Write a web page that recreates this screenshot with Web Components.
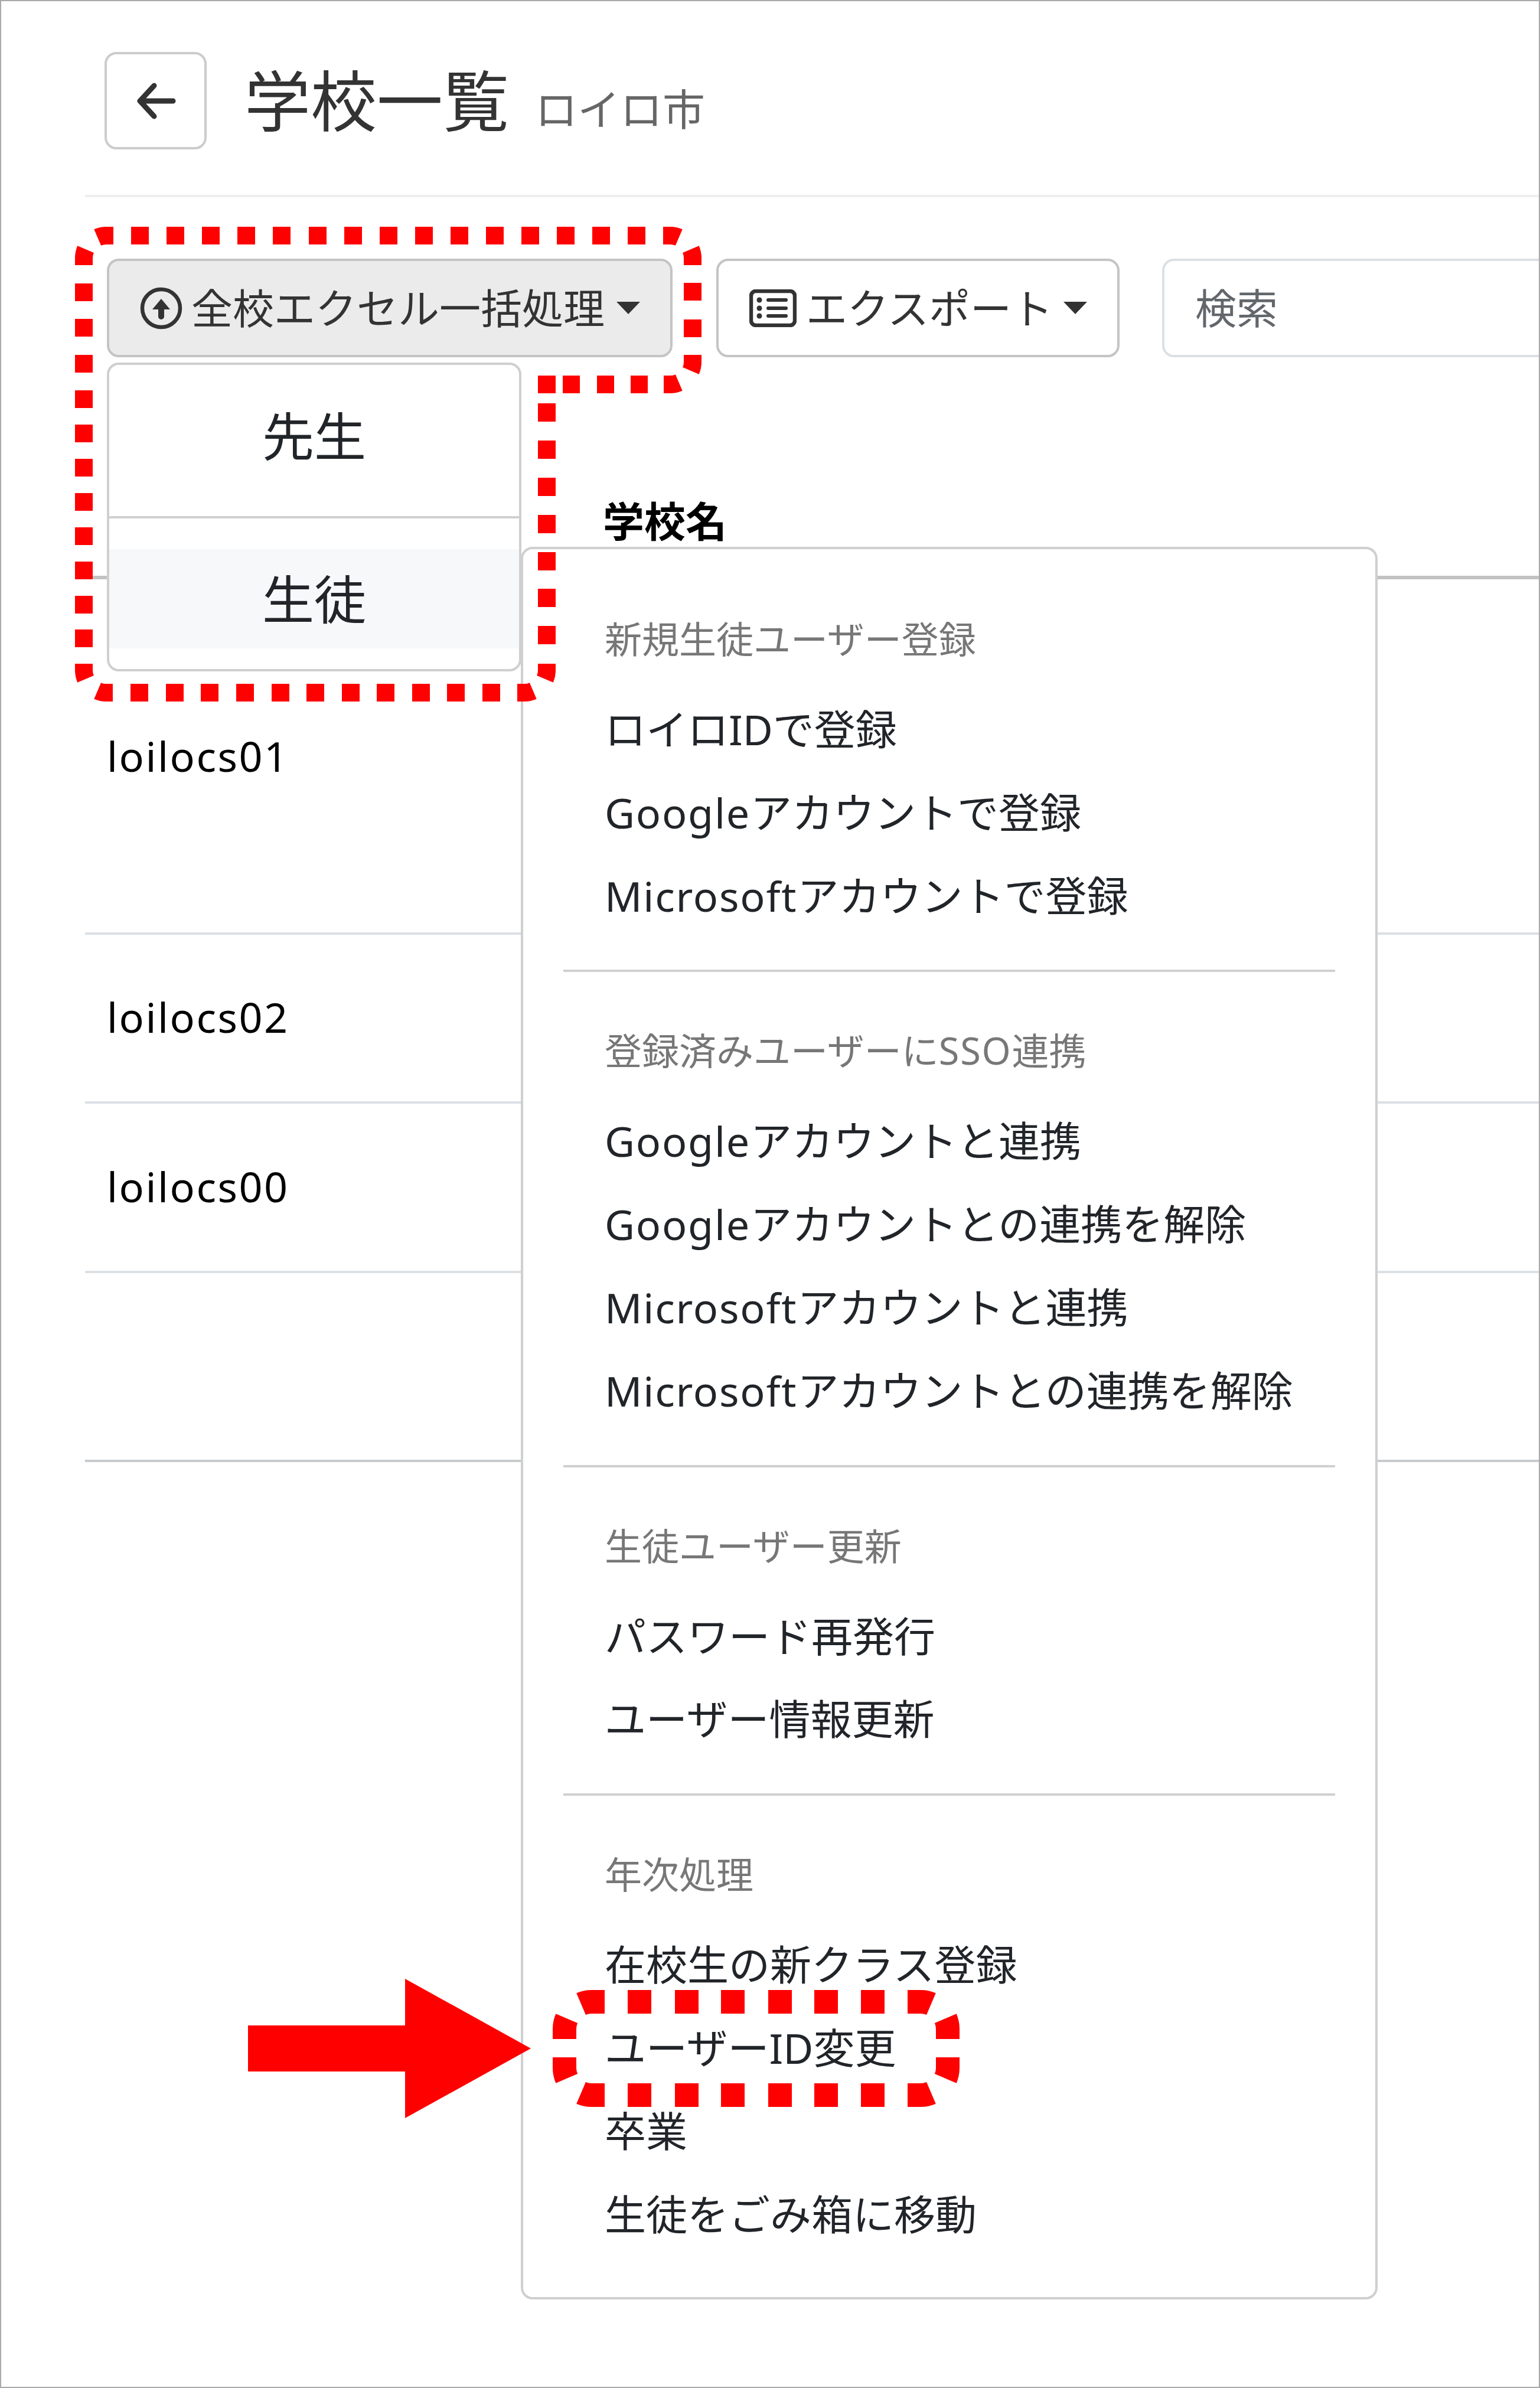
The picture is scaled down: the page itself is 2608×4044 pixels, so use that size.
<!DOCTYPE html>
<html lang="ja">
<head>
<meta charset="utf-8">
<title>学校一覧</title>
<style>
	html, body {
		margin: 0;
		background: #fff;
		font-family: "Noto Sans", "Noto Sans CJK JP", sans-serif;
		color: #212529;
	}
	/* latin words run a little wider in the reference */
	.en {
		letter-spacing: 1.8px;
	}
</style>
</head>
<body>
<app-page>
	<back-header>
		<span slot="title">学校一覧</span>
		<span slot="sub">ロイロ市</span>
	</back-header>
	<tool-bar>
		<tool-button active style="--text-gap: 15px; --caret-gap: 20px">
			<svg slot="icon" width="72" height="72" viewBox="0 0 72 72">
				<circle cx="36" cy="36" r="32" fill="none" stroke="#333" stroke-width="6.5"/>
				<path d="M36 20L51 38H41V50a5 5 0 0 1-10 0V38H21Z" fill="#333"/>
			</svg>
			全校エクセル一括処理
		</tool-button>
		<tool-button style="--text-gap: 16px; --caret-gap: 18px">
			<svg slot="icon" width="80" height="64" viewBox="0 0 80 64">
				<rect x="3" y="3" width="74" height="58" rx="8" fill="none" stroke="#333" stroke-width="6.5"/>
				<g fill="#333">
					<circle cx="17" cy="18" r="4.5"/>
					<circle cx="17" cy="32" r="4.5"/>
					<circle cx="17" cy="45" r="4.5"/>
					<rect x="29" y="15" width="36" height="6" rx="3"/>
					<rect x="29" y="29" width="36" height="6" rx="3"/>
					<rect x="29" y="42" width="36" height="6" rx="3"/>
				</g>
			</svg>
			エクスポート
		</tool-button>
		<search-box>検索</search-box>
	</tool-bar>
	<school-table>
		<span slot="head">学校名</span>
		<school-row style="--row-height: 598px">loilocs01</school-row>
		<school-row style="--row-height: 278px; --nudge: 4px">loilocs02</school-row>
		<school-row style="--row-height: 279px; --nudge: 4px">loilocs00</school-row>
		<school-row style="--row-height: 316px; --line: #c6cacd"></school-row>
	</school-table>

	<drop-menu style="left: 179px; top: 612px; width: 694px; padding: 36px 0 35px">
		<big-item>先生</big-item>
		<menu-divider style="--m-top: 52px; --m-bottom: 52px; --m-side: 0px"></menu-divider>
		<big-item hover>生徒</big-item>
	</drop-menu>

	<drop-menu style="left: 880px; top: 924px; width: 1443px; padding: 69px 0 70px">
		<menu-section>
			<span slot="heading">新規生徒ユーザー登録</span>
			<menu-item>ロイロIDで登録</menu-item>
			<menu-item><span class="en">Google</span>アカウントで登録</menu-item>
			<menu-item><span class="en">Microsoft</span>アカウントで登録</menu-item>
		</menu-section>
		<menu-divider></menu-divider>
		<menu-section>
			<span slot="heading">登録済みユーザーに<span class="en">SSO</span>連携</span>
			<menu-item><span class="en">Google</span>アカウントと連携</menu-item>
			<menu-item><span class="en">Google</span>アカウントとの連携を解除</menu-item>
			<menu-item><span class="en">Microsoft</span>アカウントと連携</menu-item>
			<menu-item><span class="en">Microsoft</span>アカウントとの連携を解除</menu-item>
		</menu-section>
		<menu-divider></menu-divider>
		<menu-section>
			<span slot="heading">生徒ユーザー更新</span>
			<menu-item>パスワード再発行</menu-item>
			<menu-item>ユーザー情報更新</menu-item>
		</menu-section>
		<menu-divider></menu-divider>
		<menu-section>
			<span slot="heading">年次処理</span>
			<menu-item>在校生の新クラス登録</menu-item>
			<menu-item>ユーザーID変更</menu-item>
			<menu-item>卒業</menu-item>
			<menu-item>生徒をごみ箱に移動</menu-item>
		</menu-section>
	</drop-menu>

	<mark-layer></mark-layer>
</app-page>

<script>
class AppPage extends HTMLElement {
	constructor() {
		super();
		this.attachShadow({ mode: 'open' }).innerHTML = `
			<style>
			:host {
				display: block;
				position: relative;
				box-sizing: border-box;
				width: 2608px;
				height: 4044px;
				border: 2px solid #aaa;
				overflow: hidden;
				background: #fff;
			}
			</style>
			<slot></slot>
		`;
	}
}

class BackHeader extends HTMLElement {
	constructor() {
		super();
		this.attachShadow({ mode: 'open' }).innerHTML = `
			<style>
			:host {
				display: block;
				margin-left: 142px;
				padding: 86px 0 77px 33px;
				border-bottom: 4px solid #eee;
			}
			.row {
				display: flex;
				align-items: center;
				height: 165px;
			}
			.back {
				display: flex;
				align-items: center;
				justify-content: center;
				box-sizing: border-box;
				width: 173px;
				height: 165px;
				border: 4px solid #ccc;
				border-radius: 20px;
			}
			.title {
				margin-left: 64px;
				font-size: 112px;
				line-height: 165px;
				color: #333;
			}
			.sub {
				margin: 28px 0 0 44px;
				font-size: 72px;
				line-height: 165px;
				color: #666;
			}
			</style>
			<div class="row">
				<div class="back">
					<svg width="72" height="62" viewBox="0 0 72 62">
						<path d="M33 5L9 31L33 57M9 31H65" fill="none" stroke="#333" stroke-width="9" stroke-linecap="round" stroke-linejoin="round"/>
					</svg>
				</div>
				<div class="title"><slot name="title"></slot></div>
				<div class="sub"><slot name="sub"></slot></div>
			</div>
		`;
	}
}

class ToolBar extends HTMLElement {
	constructor() {
		super();
		this.attachShadow({ mode: 'open' }).innerHTML = `
			<style>
			:host {
				display: flex;
				gap: 74px;
				margin: 104px 0 0 179px;
				width: 3000px;
			}
			</style>
			<slot></slot>
		`;
	}
}

class ToolButton extends HTMLElement {
	constructor() {
		super();
		this.attachShadow({ mode: 'open' }).innerHTML = `
			<style>
			:host {
				display: flex;
				align-items: center;
				box-sizing: border-box;
				height: 167px;
				padding: 0 51px 0 52px;
				border: 4px solid #c4c4c4;
				border-radius: 20px;
				font-size: 70px;
				color: #333;
				white-space: nowrap;
			}
			:host([active]) {
				background: #ebebeb;
			}
			.icon {
				display: flex;
				margin-right: var(--text-gap, 18px);
			}
			.label {
				margin-bottom: 6px;
			}
			.caret {
				margin-left: var(--caret-gap, 20px);
			}
			</style>
			<span class="icon"><slot name="icon"></slot></span>
			<span class="label"><slot></slot></span>
			<svg class="caret" width="40" height="21" viewBox="0 0 40 21"><path d="M0 0H40L20 21Z" fill="#333"/></svg>
		`;
	}
}

class SearchBox extends HTMLElement {
	constructor() {
		super();
		this.attachShadow({ mode: 'open' }).innerHTML = `
			<style>
			:host {
				display: flex;
				align-items: center;
				box-sizing: border-box;
				width: 800px;
				height: 167px;
				margin-left: -2px;
				padding: 0 0 6px 52px;
				border: 4px solid #dbe0e5;
				border-radius: 20px;
				font-size: 70px;
				color: #62676c;
			}
			</style>
			<slot></slot>
		`;
	}
}

class SchoolTable extends HTMLElement {
	constructor() {
		super();
		this.attachShadow({ mode: 'open' }).innerHTML = `
			<style>
			:host {
				display: block;
				margin-left: 142px;
			}
			.head {
				box-sizing: border-box;
				height: 376px;
				padding: 232px 0 0 877px;
				border-bottom: 6px solid #c2c2c2;
				font-size: 70px;
				line-height: 92px;
				font-weight: 700;
				color: #000;
			}
			</style>
			<div class="head"><slot name="head"></slot></div>
			<slot></slot>
		`;
	}
}

class SchoolRow extends HTMLElement {
	constructor() {
		super();
		this.attachShadow({ mode: 'open' }).innerHTML = `
			<style>
			:host {
				display: flex;
				align-items: center;
				height: var(--row-height, 282px);
				padding: 0 0 var(--nudge, 0px) 37px;
				border-bottom: 4px solid var(--line, #dbe0e5);
				font-size: 70px;
				letter-spacing: 2.5px;
				color: #000;
			}
			</style>
			<slot></slot>
		`;
	}
}

class DropMenu extends HTMLElement {
	constructor() {
		super();
		this.attachShadow({ mode: 'open' }).innerHTML = `
			<style>
			:host {
				display: block;
				position: absolute;
				border: 4px solid #cfcfcf;
				border-radius: 20px;
				background: #fff;
			}
			</style>
			<slot></slot>
		`;
	}
}

class MenuSection extends HTMLElement {
	constructor() {
		super();
		this.attachShadow({ mode: 'open' }).innerHTML = `
			<style>
			:host {
				display: block;
			}
			.heading {
				box-sizing: border-box;
				height: 166px;
				padding-left: 138px;
				font-size: 63px;
				line-height: 166px;
				color: #777;
				white-space: nowrap;
			}
			</style>
			<div class="heading"><slot name="heading"></slot></div>
			<slot></slot>
		`;
	}
}

class MenuItem extends HTMLElement {
	constructor() {
		super();
		this.attachShadow({ mode: 'open' }).innerHTML = `
			<style>
			:host {
				display: block;
				height: 140.8px;
				padding-left: 138px;
				font-size: 70px;
				line-height: 140.8px;
				color: #212529;
				white-space: nowrap;
			}
			</style>
			<slot></slot>
		`;
	}
}

class BigItem extends HTMLElement {
	constructor() {
		super();
		this.attachShadow({ mode: 'open' }).innerHTML = `
			<style>
			:host {
				display: block;
				height: 168px;
				font-size: 88px;
				line-height: 168px;
				text-align: center;
				color: #212529;
			}
			:host([hover]) {
				background: #f7f8f9;
			}
			</style>
			<slot></slot>
		`;
	}
}

class MenuDivider extends HTMLElement {
	constructor() {
		super();
		this.attachShadow({ mode: 'open' }).innerHTML = `
			<style>
			:host {
				display: block;
				height: 4px;
				margin: var(--m-top, 55px) var(--m-side, 68px) var(--m-bottom, 50px);
				background: #d0d0d0;
			}
			</style>
		`;
	}
}

// the red annotations over the screenshot, dash by dash
class MarkLayer extends HTMLElement {
	constructor() {
		super();
		this.attachShadow({ mode: 'open' }).innerHTML = `
			<style>
			:host {
				position: absolute;
				left: -2px;
				top: -2px;
				width: 2608px;
				height: 4044px;
				pointer-events: none;
			}
			svg {
				display: block;
			}
			</style>
			<svg width="2608" height="4044" viewBox="0 0 2608 4044">
				<g fill="none" stroke="#f00">
					<path stroke-width="30" d="${this.ring_one()}"/>
					<path stroke-width="40" d="${this.ring_two()}"/>
				</g>
				<path d="M420 3430H686V3351L899 3469L686 3587V3508H420Z" fill="#f00"/>
			</svg>
		`;
	}

	// one rounded corner: a piece on the horizontal side and a piece on the vertical side
	corner(cx, cy, sx, sy, r, hx, vy) {
		const sweep = sx * sy < 0 ? 1 : 0;
		const a = `${cx + sx * r * 0.39} ${cy + sy * r * 0.92}`;
		const b = `${cx + sx * r * 0.92} ${cy + sy * r * 0.39}`;
		return `M${hx} ${cy + sy * r}H${cx}A${r} ${r} 0 0 ${sweep} ${a}`
			+ `M${b}A${r} ${r} 0 0 ${sweep} ${cx + sx * r} ${cy}V${vy}`;
	}

	across(y, starts, len) {
		return starts.map((x) => `M${x} ${y}h${len}`).join('');
	}

	down(x, starts, len) {
		return starts.map((y) => `M${x} ${y}v${len}`).join('');
	}

	ring_one() {
		const top = Array.from({ length: 15 }, (_, k) => Math.round(222 + 60.1 * k));
		return [
			this.corner(180, 437, -1, -1, 38, 192, 449),
			this.corner(1135, 437, 1, -1, 38, 1123, 449),
			this.corner(1135, 613, 1, 1, 38, 1124, 601),
			this.corner(888, 1135, 1, 1, 38, 876, 1124),
			this.corner(180, 1135, -1, 1, 38, 191, 1124),
			'M941 651H926V666',
			this.across(399, top, 30),
			this.down(142, [480, 540, 601, 661, 719, 777, 835, 893, 951, 1009, 1066], 30),
			this.down(1173, [479, 541], 30),
			this.across(651, [953, 1011, 1068], 29),
			this.down(926, [683, 746, 809, 872, 935, 997, 1060], 31),
			this.across(1173, [221, 281, 340, 400, 460, 519, 579, 638, 698, 757, 817], 30),
		].join('');
	}

	ring_two() {
		const dashes = [1063, 1143, 1221, 1301, 1379, 1458];
		return [
			this.corner(1002, 3436, -1, -1, 46, 1024, 3453),
			this.corner(1559, 3436, 1, -1, 46, 1537, 3453),
			this.corner(1559, 3502, 1, 1, 46, 1537, 3484),
			this.corner(1002, 3502, -1, 1, 46, 1024, 3484),
			this.across(3390, dashes, 40),
			this.across(3548, dashes, 40),
		].join('');
	}
}

customElements.define('app-page', AppPage);
customElements.define('back-header', BackHeader);
customElements.define('tool-bar', ToolBar);
customElements.define('tool-button', ToolButton);
customElements.define('search-box', SearchBox);
customElements.define('school-table', SchoolTable);
customElements.define('school-row', SchoolRow);
customElements.define('drop-menu', DropMenu);
customElements.define('menu-section', MenuSection);
customElements.define('menu-item', MenuItem);
customElements.define('big-item', BigItem);
customElements.define('menu-divider', MenuDivider);
customElements.define('mark-layer', MarkLayer);
</script>
</body>
</html>
